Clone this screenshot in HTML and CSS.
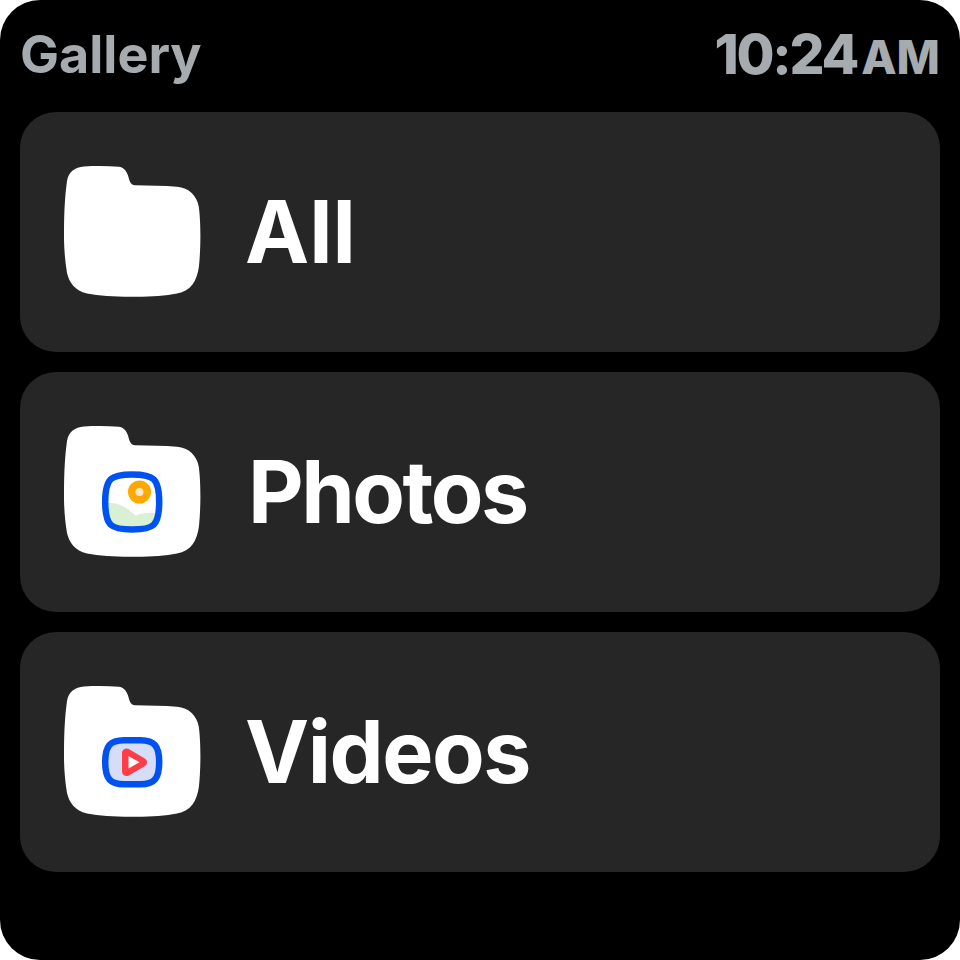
FILE: index.html
```html
<!DOCTYPE html>
<html lang="en">
<head>
  <meta charset="UTF-8">
  <title>Gallery</title>
  <link rel="stylesheet" href="styles.css">
</head>
<body>

  <div class="screen">
    <div class="header">
      <span class="title">Gallery</span>
      <span class="time">10:24<span class="ampm">AM</span></span>
    </div>

    <div class="list">
      <div class="row">
        <svg class="folder" viewBox="0 0 137 131">
          <path class="folder-shape" d="M0 65C0 46 1 29 3 15C4.5 6 11 1 20 .5C32 -.2 43 -.1 54.8 .7C59 1 62 4 63.8 9C65.5 14 66 19 71 19.300C85 19.600 100 19.800 113 20.700C125 21.500 133 30 134.800 40.700C136.800 55 137 80 135 100C133 115 127 125 113 127.500C100 130 85 131 66 130.700C50 130.700 35 130 23 127.500C11 125 5 116 3 107C.5 92 -.2 78 0 65Z"/>
        </svg>
        <span class="label label-all">All</span>
      </div>

      <div class="row">
        <svg class="folder" viewBox="0 0 137 131">
          <path class="folder-shape" d="M0 65C0 46 1 29 3 15C4.5 6 11 1 20 .5C32 -.2 43 -.1 54.8 .7C59 1 62 4 63.8 9C65.5 14 66 19 71 19.300C85 19.600 100 19.800 113 20.700C125 21.500 133 30 134.800 40.700C136.800 55 137 80 135 100C133 115 127 125 113 127.500C100 130 85 131 66 130.700C50 130.700 35 130 23 127.500C11 125 5 116 3 107C.5 92 -.2 78 0 65Z"/>
          <path fill="#d9f0d5" d="M42 77C52 76 62 80 71.500 89.700C76 87 84 86.500 94 87.500C94 94 92 99 85 101C75 103 60 103 51 101C44 99 42 92 42 77Z"/>
          <path class="blue-line" d="M41.2 76C41.2 52 47 48.500 68.200 48.500C89.400 48.500 95.200 52 95.200 76C95.200 100 89.400 103.500 68.200 103.500C47 103.500 41.200 100 41.200 76Z"/>
          <circle cx="75.500" cy="66" r="11.500" fill="#ffa800"/>
          <circle cx="75.500" cy="66" r="4" fill="#ffe8c8"/>
        </svg>
        <span class="label label-photos">Photos</span>
      </div>

      <div class="row">
        <svg class="folder" viewBox="0 0 137 131">
          <path class="folder-shape" d="M0 65C0 46 1 29 3 15C4.5 6 11 1 20 .5C32 -.2 43 -.1 54.8 .7C59 1 62 4 63.8 9C65.5 14 66 19 71 19.300C85 19.600 100 19.800 113 20.700C125 21.500 133 30 134.800 40.700C136.800 55 137 80 135 100C133 115 127 125 113 127.500C100 130 85 131 66 130.700C50 130.700 35 130 23 127.500C11 125 5 116 3 107C.5 92 -.2 78 0 65Z"/>
          <path class="blue-line video-bg" d="M41.2 76.300C41.2 60 46 54.300 60 54.300L76.400 54.300C90.400 54.300 95.200 60 95.200 76.300C95.200 92.600 90.400 98.300 76.400 98.300L60 98.300C46 98.300 41.200 92.600 41.200 76.300Z"/>
          <path class="play" d="M62.500 67L62.500 85.500L78.500 76.300Z"/>
          <path fill="#fff" d="M64.500 70L64.500 82.500L75.500 76.300Z"/>
        </svg>
        <span class="label">Videos</span>
      </div>
    </div>
  </div>

</body>
</html>
```
FILE: styles.css
```css
body { margin: 0; background: #fff; font-family: Inter, "Liberation Sans", sans-serif; }
.screen {
  width: 960px;
  height: 960px;
  background: #000;
  border-radius: 40px;
  padding: 0 20px;
  box-sizing: border-box;
}
.header {
  height: 112px;
  display: flex;
  justify-content: space-between;
  align-items: center;
  color: #a6abb0;
  padding-bottom: 4px;
  box-sizing: border-box;
}
.title { font-size: 52px; font-weight: 700; }
.time { font-size: 55px; font-weight: 800; letter-spacing: -2.2px; }
.ampm { font-size: 46px; font-weight: 800; letter-spacing: 0; margin-left: 4px; }
.list { display: flex; flex-direction: column; gap: 20px; }
.row {
  height: 240px;
  background: #262626;
  border-radius: 36px;
  display: flex;
  align-items: center;
  padding-left: 44px;
  gap: 47px;
}
.folder { width: 137px; height: 131px; flex-shrink: 0; margin-bottom: 2px; }
.folder-shape { fill: #fff; }
.blue-line { fill: none; stroke: #0052f0; stroke-width: 6.5; }
.video-bg { fill: #d5ddf8; }
.play { fill: #ff3d47; stroke: #ff3d47; stroke-width: 9; stroke-linejoin: round; }
.label { color: #fff; font-size: 86px; font-weight: 700; letter-spacing: -1.5px; margin-left: -3px; }
.label-all { letter-spacing: 0; }
.label-photos { margin-left: 0; letter-spacing: -2.5px; }
```
